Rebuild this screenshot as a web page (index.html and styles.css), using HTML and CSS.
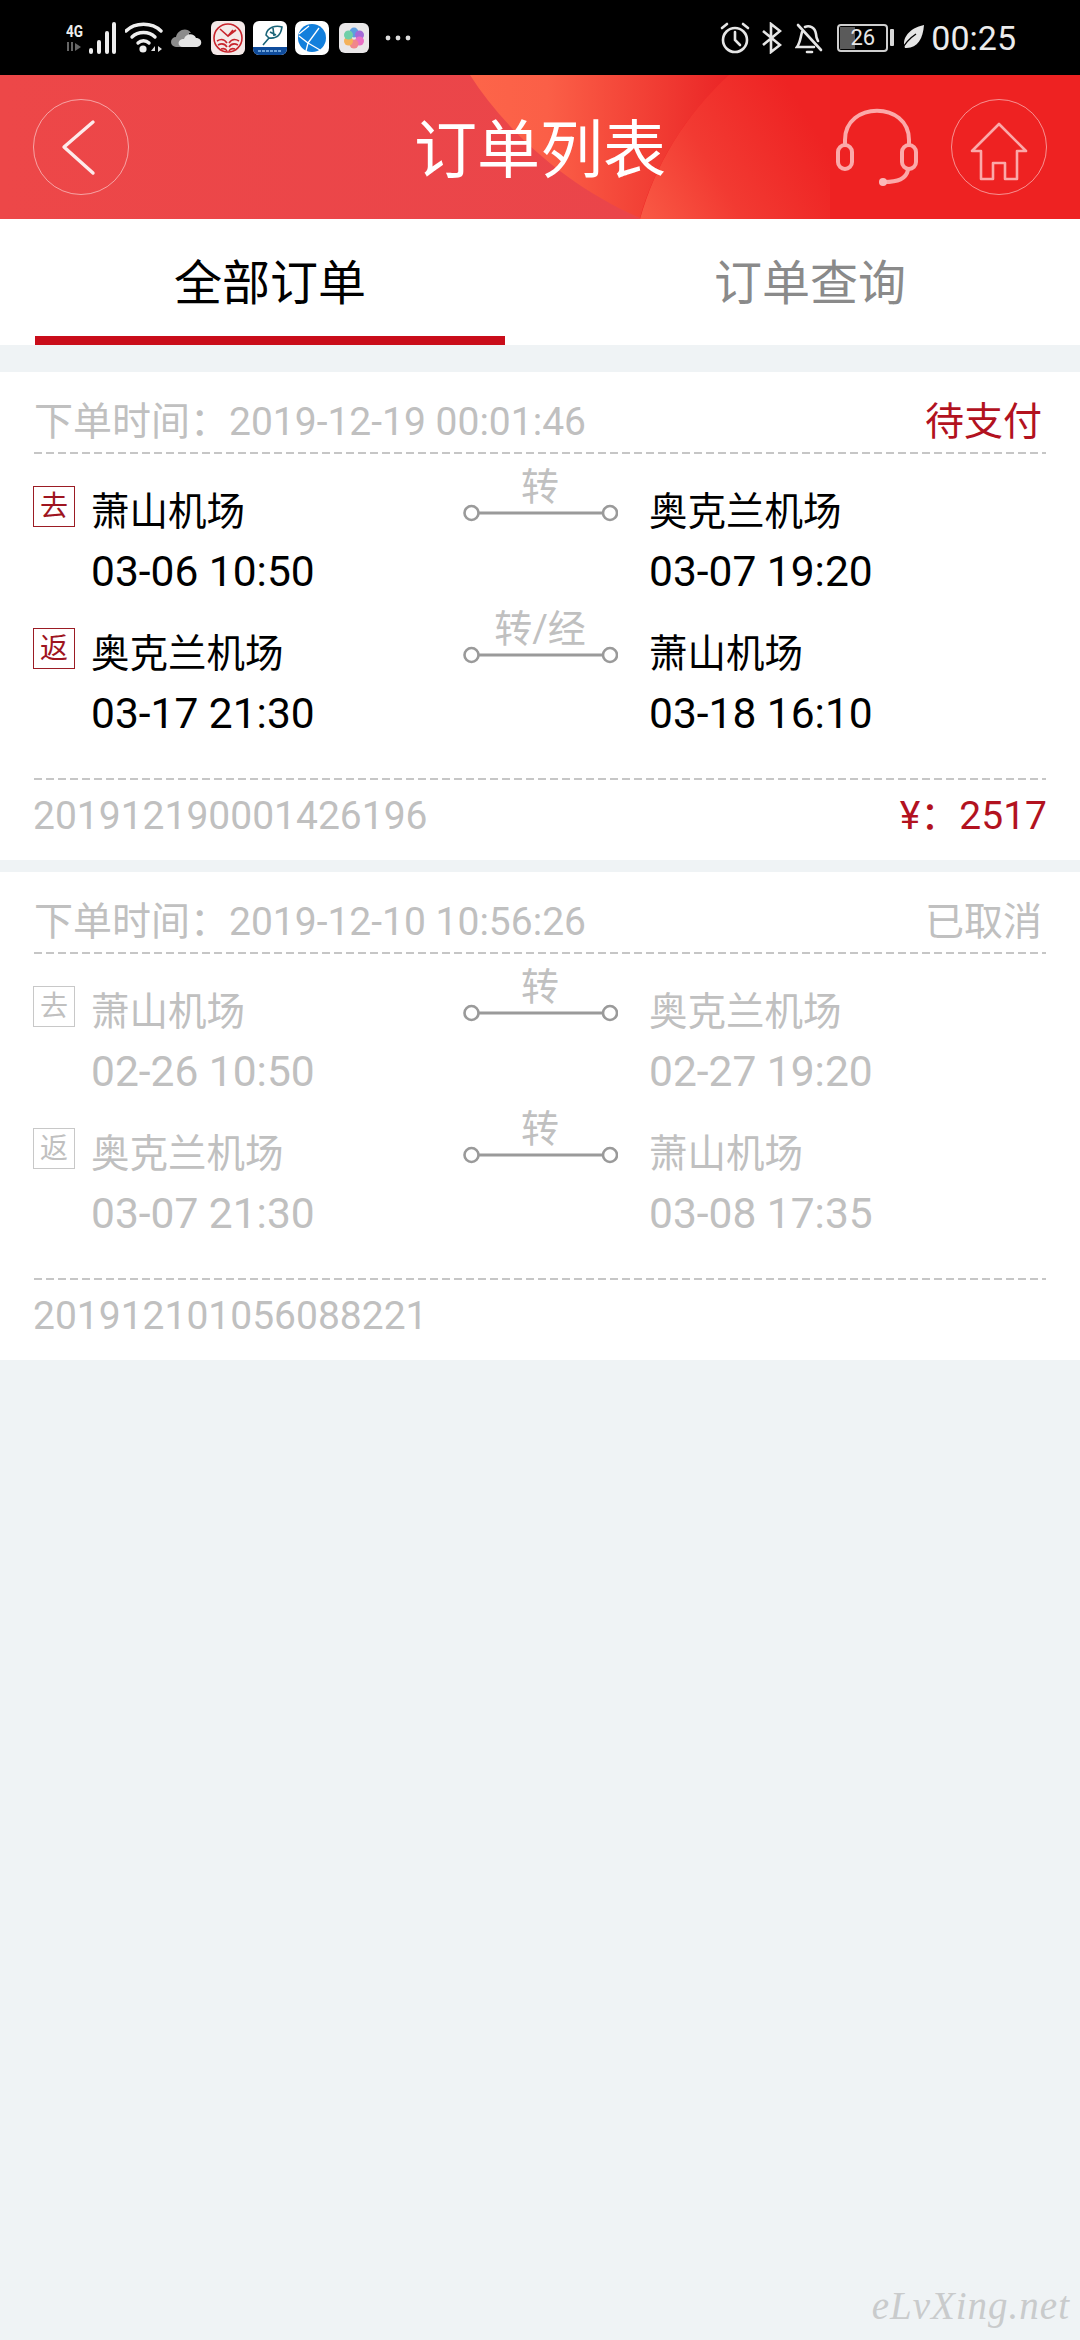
FILE: index.html
```html
<!DOCTYPE html>
<html lang="zh-CN">
<head>
<meta charset="utf-8">
<title>订单列表</title>
<link rel="stylesheet" href="styles.css">
</head>
<body>
<div class="page">
  <div class="statusbar">
    <div class="status-left">
      <svg class="ic-signal" width="50" height="32" viewBox="0 0 50 32">
        <text x="0" y="15" class="net" textLength="17" lengthAdjust="spacingAndGlyphs">4G</text>
        <path d="M2 20v9M6 20v9" stroke="#666" stroke-width="2" fill="none"/>
        <path d="M9 21l6 4-6 4z" fill="#666"/>
        <g stroke="#eee" stroke-width="4" stroke-linecap="round" fill="none">
          <path d="M25 28v2M33 20v10M41 11v19M48 2v28"/>
        </g>
      </svg>
      <svg class="ic-wifi" width="38" height="32" viewBox="0 0 38 32">
        <g fill="none" stroke="#eee" stroke-width="3.4" stroke-linecap="round">
          <path d="M1 9C10 0 27 0 36 9"/>
          <path d="M7 15C13 9 24 9 30 15"/>
          <path d="M13 21c3-3 8-3 11 0"/>
        </g>
        <circle cx="18" cy="27" r="3.6" fill="#eee"/>
        <path d="M26 29l4-5v5zM33 24l4 3-4 3z" fill="#ddd"/>
      </svg>
      <svg class="ic-cloud" width="31" height="21" viewBox="0 0 31 21">
        <path d="M5 20a5 5 0 0 1 0-10c1-6 10-11 15-4h-2v14z" fill="#8c8c8c"/>
        <path d="M12 20c-6 0-6-8 1-8 2-6 10-6 12-1 7 0 7 9 0 9z" fill="#e4e4e4"/>
      </svg>
      <svg class="app" width="34" height="34" viewBox="0 0 34 34">
        <rect width="34" height="34" rx="6" fill="#f4e9e8"/>
        <circle cx="17" cy="17" r="14" fill="none" stroke="#c8242c" stroke-width="1.6"/>
        <path d="M6 20c5-3 8-1 10 2M28 20c-5-3-8-1-10 2M7 24c4-2 7-1 9 2M27 24c-4-2-7-1-9 2M10 28c3-1 5 0 6 2M24 28c-3-1-5 0-6 2M9 8l8 7 5-6M17 15l8-6" fill="none" stroke="#c8242c" stroke-width="1.6"/>
      </svg>
      <svg class="app" width="34" height="34" viewBox="0 0 34 34">
        <rect width="34" height="34" rx="6" fill="#fff"/>
        <path d="M0 26h34v2a6 6 0 0 1-6 6H6a6 6 0 0 1-6-6z" fill="#0f4c9c"/>
        <path d="M5 30h24" stroke="#8fc0ee" stroke-width="1.6" stroke-dasharray="3 1"/>
        <path d="M13 14C14 6 23 4 29 6c-1 7-5 12-13 11zM16 17l-6 7M17 11l6 3M20 7l1 8" fill="none" stroke="#1a6478" stroke-width="1.6"/>
      </svg>
      <svg class="app" width="34" height="34" viewBox="0 0 34 34">
        <rect width="34" height="34" rx="7" fill="#fff"/>
        <circle cx="17" cy="17" r="14" fill="#127fdc"/>
        <path d="M4 15l9 7 11-15M13 22l12 7M13 22l-2 8M4 13l10-8" fill="none" stroke="#fff" stroke-width="1.3"/>
      </svg>
      <svg class="app app-last" width="30" height="30" viewBox="0 0 30 30">
        <rect width="30" height="30" rx="6" fill="#e9e7e8"/>
        <ellipse cx="15" cy="9.5" rx="4.5" ry="5" fill="#5f9ddf"/>
        <ellipse cx="20.5" cy="12" rx="4.5" ry="4.5" fill="#a46ad8"/>
        <ellipse cx="20.5" cy="18" rx="4.5" ry="4.5" fill="#e96fc4"/>
        <ellipse cx="15" cy="21" rx="4.5" ry="4.5" fill="#f1878c"/>
        <ellipse cx="9.5" cy="18" rx="4.5" ry="4.5" fill="#f4b25a"/>
        <ellipse cx="9.5" cy="12" rx="4.5" ry="4.5" fill="#6fcfa8"/>
      </svg>
      <svg class="ic-dots" width="26" height="6" viewBox="0 0 26 6">
        <circle cx="3" cy="3" r="2.4" fill="#ddd"/><circle cx="13" cy="3" r="2.4" fill="#ddd"/><circle cx="23" cy="3" r="2.4" fill="#ddd"/>
      </svg>
    </div>
    <div class="status-right">
      <svg class="ic-alarm" width="30" height="32" viewBox="0 0 30 32">
        <g fill="none" stroke="#e6e6e6" stroke-width="2.6" stroke-linecap="round">
          <circle cx="15" cy="18" r="12"/>
          <path d="M15 10v8l5 5M2 6l5-4M28 6l-5-4"/>
        </g>
      </svg>
      <svg class="ic-bt" width="21" height="32" viewBox="0 0 21 32">
        <path d="M2 9l17 14-9 7V2l9 7L2 23" fill="none" stroke="#e6e6e6" stroke-width="2.6"/>
      </svg>
      <svg class="ic-bell" width="28" height="32" viewBox="0 0 28 32">
        <g fill="none" stroke="#e6e6e6" stroke-width="2.6" stroke-linecap="round">
          <path d="M7 10c-2 8-2 11-5 15h17M10 5c4-2 10 0 11 7 0 3 1 5 2 7"/>
          <path d="M3 3l23 25"/>
          <path d="M12 30h5"/>
        </g>
      </svg>
      <div class="battery">
        <div class="battery-body"><span class="battery-fill"></span><span class="battery-num">26</span></div>
        <span class="battery-nub"></span>
      </div>
      <svg class="ic-leaf" width="23" height="26" viewBox="0 0 23 26">
        <path d="M23 0C22 14 16 24 4 23 0 14 8 3 23 0z" fill="#e6e6e6"/>
        <path d="M0 26C4 18 9 13 15 9" stroke="#000" stroke-width="1.4" fill="none"/>
      </svg>
      <span class="clock">00:25</span>
    </div>
  </div>

  <header class="topbar">
    <svg class="topbar-art" width="1080" height="144" viewBox="0 0 1080 144">
      <defs>
        <linearGradient id="lensFill" x1="0" y1="0" x2="1" y2="0">
          <stop offset="0" stop-color="#fd6549"/>
          <stop offset="0.3" stop-color="#fb5f47"/>
          <stop offset="1" stop-color="#ea2526"/>
        </linearGradient>
        <linearGradient id="sweepFill" x1="0" y1="1" x2="1" y2="0.55">
          <stop offset="0" stop-color="#f95a45"/>
          <stop offset="0.45" stop-color="#f23a32"/>
          <stop offset="1" stop-color="#ee2323"/>
        </linearGradient>
      </defs>
      <path d="M470 0C505 55 565 110 640 143C655 90 685 40 729 0Z" fill="url(#lensFill)"/>
      <path d="M729 0C685 40 655 90 640 144H830V0Z" fill="url(#sweepFill)"/>
    </svg>
    <button class="round-btn" type="button" aria-label="返回">
      <svg width="96" height="96" viewBox="0 0 96 96">
        <path d="M60 23L31 48L60 74" fill="none" stroke="#fdeaea" stroke-width="3.4" stroke-linecap="round" stroke-linejoin="round"/>
      </svg>
    </button>
    <h1 class="title">订单列表</h1>
    <div class="topbar-right">
      <svg class="ic-headset" width="82" height="80" viewBox="0 0 82 80">
        <g fill="none" stroke="#fba9a9" stroke-width="4" stroke-linecap="round">
          <path d="M9 38V34C9 -5 73 -5 73 34V38"/>
          <rect x="2" y="39" width="14" height="24" rx="7"/>
          <rect x="66" y="39" width="14" height="24" rx="7"/>
          <path d="M72 64C70 73 62 76 48 76"/>
        </g>
        <circle cx="47" cy="76" r="4" fill="#fbb9b9"/>
      </svg>
      <button class="round-btn" type="button" aria-label="首页">
        <svg width="96" height="96" viewBox="0 0 96 96">
          <path d="M21 52L48 25L75 52H66V80H54V64H42V80H30V52Z" fill="none" stroke="#fba9a9" stroke-width="2.6" stroke-linejoin="round"/>
        </svg>
      </button>
    </div>
  </header>

  <nav class="tabs">
    <div class="tab is-active"><span class="tab-label">全部订单</span><span class="tab-bar"></span></div>
    <div class="tab"><span class="tab-label">订单查询</span><span class="tab-bar"></span></div>
  </nav>

  <section class="order">
    <div class="order-head"><span>下单时间：2019-12-19 00:01:46</span><span class="status-red">待支付</span></div>
    <div class="dash"></div>
    <div class="route">
      <span class="tag">去</span>
      <div class="place"><div class="name">萧山机场</div><div class="time">03-06 10:50</div></div>
      <div class="link"><span class="link-label">转</span><svg width="156" height="18" viewBox="0 0 156 18"><path d="M16 9H141" stroke="#9a9a9a" stroke-width="3"/><circle cx="9.5" cy="9" r="7" fill="#fff" stroke="#9a9a9a" stroke-width="2.6"/><circle cx="148" cy="9" r="7" fill="#fff" stroke="#9a9a9a" stroke-width="2.6"/></svg></div>
      <div class="place place-end"><div class="name">奥克兰机场</div><div class="time">03-07 19:20</div></div>
    </div>
    <div class="route">
      <span class="tag">返</span>
      <div class="place"><div class="name">奥克兰机场</div><div class="time">03-17 21:30</div></div>
      <div class="link"><span class="link-label">转/经</span><svg width="156" height="18" viewBox="0 0 156 18"><path d="M16 9H141" stroke="#9a9a9a" stroke-width="3"/><circle cx="9.5" cy="9" r="7" fill="#fff" stroke="#9a9a9a" stroke-width="2.6"/><circle cx="148" cy="9" r="7" fill="#fff" stroke="#9a9a9a" stroke-width="2.6"/></svg></div>
      <div class="place place-end"><div class="name">萧山机场</div><div class="time">03-18 16:10</div></div>
    </div>
    <div class="dash dash-foot"></div>
    <div class="order-foot"><span>201912190001426196</span><span class="price">¥：2517</span></div>
  </section>

  <section class="order is-muted">
    <div class="order-head"><span>下单时间：2019-12-10 10:56:26</span><span>已取消</span></div>
    <div class="dash"></div>
    <div class="route">
      <span class="tag">去</span>
      <div class="place"><div class="name">萧山机场</div><div class="time">02-26 10:50</div></div>
      <div class="link"><span class="link-label">转</span><svg width="156" height="18" viewBox="0 0 156 18"><path d="M16 9H141" stroke="#9a9a9a" stroke-width="3"/><circle cx="9.5" cy="9" r="7" fill="#fff" stroke="#9a9a9a" stroke-width="2.6"/><circle cx="148" cy="9" r="7" fill="#fff" stroke="#9a9a9a" stroke-width="2.6"/></svg></div>
      <div class="place place-end"><div class="name">奥克兰机场</div><div class="time">02-27 19:20</div></div>
    </div>
    <div class="route">
      <span class="tag">返</span>
      <div class="place"><div class="name">奥克兰机场</div><div class="time">03-07 21:30</div></div>
      <div class="link"><span class="link-label">转</span><svg width="156" height="18" viewBox="0 0 156 18"><path d="M16 9H141" stroke="#9a9a9a" stroke-width="3"/><circle cx="9.5" cy="9" r="7" fill="#fff" stroke="#9a9a9a" stroke-width="2.6"/><circle cx="148" cy="9" r="7" fill="#fff" stroke="#9a9a9a" stroke-width="2.6"/></svg></div>
      <div class="place place-end"><div class="name">萧山机场</div><div class="time">03-08 17:35</div></div>
    </div>
    <div class="dash dash-foot"></div>
    <div class="order-foot"><span>201912101056088221</span></div>
  </section>

  <div class="watermark">eLvXing.net</div>
</div>
</body>
</html>
```

FILE: styles.css
```css
* { box-sizing: border-box; }

html, body { margin: 0; padding: 0; }

body {
  font-family: Roboto, "Noto Sans CJK SC", sans-serif;
  background: #eff3f5;
}

.page {
  position: relative;
  width: 1080px;
  height: 2340px;
  overflow: hidden;
  background: #eff3f5;
}

/* status bar */
.statusbar {
  display: flex;
  justify-content: space-between;
  align-items: center;
  height: 75px;
  padding: 0 64px 0 66px;
  background: #000;
}

.status-left, .status-right {
  display: flex;
  align-items: center;
}

.net {
  font-family: Roboto, sans-serif;
  font-size: 17px;
  font-weight: 700;
  fill: #eee;
}

.ic-wifi { margin-left: 9px; }
.ic-cloud { margin-left: 8px; }
.app { margin-left: 8px; }
.ic-cloud + .app { margin-left: 9px; }
.app-last { margin-left: 10px; }
.ic-dots { margin-left: 16px; }

.ic-bt { margin-left: 11px; }
.ic-bell { margin-left: 13px; }

.battery {
  display: flex;
  align-items: center;
  margin-left: 14px;
}

.battery-body {
  position: relative;
  display: flex;
  align-items: center;
  justify-content: center;
  width: 51px;
  height: 28px;
  border: 2px solid #cfcfcf;
  border-radius: 4px;
}

.battery-fill {
  position: absolute;
  left: 1px;
  top: 1px;
  bottom: 1px;
  width: 15px;
  background: #5a5a5a;
}

.battery-num {
  position: relative;
  font-size: 22px;
  line-height: 24px;
  color: #e6e6e6;
}

.battery-nub {
  width: 4px;
  height: 17px;
  margin-left: 2px;
  background: #d8d8d8;
  border-radius: 1px;
}

.ic-leaf { margin-left: 7px; }

.clock {
  margin-left: 7px;
  font-size: 34px;
  color: #ececec;
}

/* top bar */
.topbar {
  position: relative;
  display: flex;
  align-items: center;
  justify-content: space-between;
  height: 144px;
  padding: 0 33px 0 33px;
  background: linear-gradient(90deg, #ed4748 0, #ea454a 640px, #ee2222 640px);
}

.topbar-art {
  position: absolute;
  left: 0;
  top: 0;
}

.round-btn {
  position: relative;
  display: block;
  width: 96px;
  height: 96px;
  padding: 0;
  border: 1px solid rgba(255, 255, 255, 0.5);
  border-radius: 50%;
  background: transparent;
}

.round-btn svg {
  position: absolute;
  left: -1px;
  top: -1px;
}

.title {
  position: absolute;
  left: 0;
  right: 0;
  top: 0;
  margin: 0;
  text-align: center;
  font-size: 63px;
  line-height: 152px;
  font-weight: 400;
  color: #fff;
}

.topbar-right {
  position: relative;
  display: flex;
  align-items: center;
  gap: 33px;
}

.ic-headset { margin-top: -3px; }

/* tabs */
.tabs {
  display: flex;
  height: 126px;
  background: #fff;
}

.tab {
  flex: 1;
  display: flex;
  flex-direction: column;
  align-items: center;
  padding-top: 35px;
}

.tab-label {
  font-size: 48px;
  line-height: 60px;
  color: #8a8a8a;
}

.tab-bar {
  width: 470px;
  height: 9px;
  margin-top: 22px;
}

.is-active .tab-label { color: #000; }
.is-active .tab-bar { background: #c90d1a; }

/* order card */
.order {
  margin-top: 27px;
  padding: 0 33px;
  height: 488px;
  background: #fff;
}

.order + .order { margin-top: 12px; }

.order-head {
  display: flex;
  justify-content: space-between;
  padding: 26px 5px 6px 1px;
  font-size: 39px;
  line-height: 48px;
  color: #c0c0c0;
}

.status-red { color: #b2121f; }

.dash {
  height: 2px;
  margin-left: 1px;
  margin-right: 1px;
  background: repeating-linear-gradient(90deg, #c6c6c6 0, #c6c6c6 8px, transparent 8px, transparent 12px);
}

.dash-foot { margin-top: 34px; }

.route {
  display: grid;
  grid-template-columns: 58px 371px 156px 1fr;
  margin-top: 20px;
}

.dash + .route { margin-top: 26px; }

.tag {
  display: flex;
  align-items: center;
  justify-content: center;
  align-self: start;
  width: 42px;
  height: 41px;
  margin-top: 6px;
  border: 1px solid #9b1c24;
  font-size: 28px;
  line-height: 1;
  color: #9e1420;
}

.place { padding-bottom: 2px; }

.name {
  font-size: 38.5px;
  line-height: 63px;
  color: #000;
}

.time {
  font-size: 42.5px;
  line-height: 57px;
  color: #000;
}

.place-end { padding-left: 31px; }

.link {
  display: flex;
  flex-direction: column;
  align-items: center;
  align-self: start;
  margin-top: -17px;
}

.link svg { display: block; }

.link-label {
  padding-top: 8px;
  font-size: 38px;
  line-height: 33px;
  color: #c0c0c0;
}

.order-foot {
  display: flex;
  justify-content: space-between;
  padding-top: 12px;
  font-size: 39px;
  line-height: 48px;
  color: #c0c0c0;
}

.price { color: #b2121f; }

/* muted card */
.is-muted .name,
.is-muted .time { color: #c0c0c0; }

.is-muted .tag {
  border-color: #c8c8c8;
  color: #c0c0c0;
}

/* watermark */
.watermark {
  position: absolute;
  right: 10px;
  bottom: 10px;
  font-family: "Liberation Serif", serif;
  font-style: italic;
  font-size: 39px;
  line-height: 48px;
  letter-spacing: 1px;
  color: #c9cbcc;
}
```
